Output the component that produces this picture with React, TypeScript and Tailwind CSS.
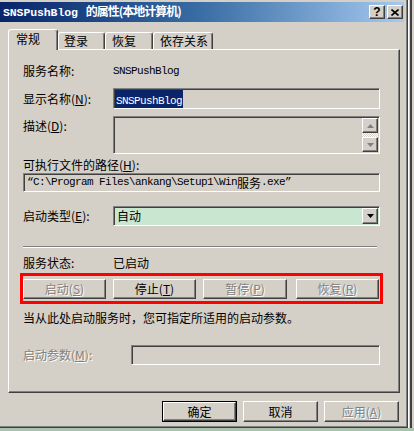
import React from 'react';

const cjk = "font-['Noto_Sans_CJK_SC',sans-serif]";
const mono = "font-['Liberation_Mono','Noto_Sans_CJK_SC',monospace]";

const raised =
  'border border-t-white border-l-white border-r-[#404040] border-b-[#404040] shadow-[inset_-1px_-1px_0_#808080]';
const sunken =
  'border border-t-[#808080] border-l-[#808080] border-r-white border-b-white shadow-[inset_1px_1px_0_#404040]';
const etched = 'text-[#808080] [text-shadow:1px_1px_0_#ffffff]';

const Key = ({ k }: { k: string }) => (
  <>
    (<span className="underline underline-offset-1">{k}</span>)
  </>
);

const Label: React.FC<{ text: string; k?: string; disabled?: boolean; className?: string }> = ({
  text,
  k,
  disabled,
  className = '',
}) => (
  <div className={`w-[90px] shrink-0 text-[12px] leading-[14px] ${disabled ? etched : 'text-black'} ${className}`}>
    {text}
    {k && <Key k={k} />}:
  </div>
);

const Latin: React.FC<{ children: React.ReactNode; className?: string }> = ({ children, className = '' }) => (
  <span className={`${mono} text-[11px] tracking-[-0.6px] ${className}`}>{children}</span>
);

const Arrow = ({ dir, color = '#000' }: { dir: 'up' | 'down'; color?: string }) => (
  <svg width="7" height="4" viewBox="0 0 7 4">
    {dir === 'up' ? <path d="M3.5 0 L7 4 L0 4 Z" fill={color} /> : <path d="M0 0 L7 0 L3.5 4 Z" fill={color} />}
  </svg>
);

const ServiceButton: React.FC<{ label: string; k: string; disabled?: boolean; className?: string }> = ({
  label,
  k,
  disabled,
  className = '',
}) => (
  <div
    className={`h-[20px] flex items-center justify-center text-[12px] ${raised} ${disabled ? etched : 'text-black'} ${className}`}
  >
    {label}
    <Key k={k} />
  </div>
);

export default function App() {
  return (
    <div className={`w-[414px] h-[431px] bg-[#a9c3ae] flex overflow-hidden ${cjk}`}>
      <div className="w-[408px] h-[428px] shrink-0 bg-[#d4d0c8] border-r border-b border-[#404040] shadow-[inset_-1px_-1px_0_#808080] flex flex-col">
        {/* title bar */}
        <div className="mt-[2px] mr-[3px] h-[20px] flex items-center bg-gradient-to-r from-[#0a246a] via-[#3a6ea5] to-[#a6caf0]">
          <div className="pl-[3px] text-white font-bold text-[12px] leading-[14px] whitespace-nowrap flex items-baseline">
            <span className="font-['Liberation_Mono','DejaVu_Sans_Mono',monospace] text-[11.5px] tracking-[-0.1px]">
              SNSPushBlog
            </span>
            <span className="ml-[8px] tracking-[-1px]">的属性(本地计算机)</span>
          </div>
          <div className="ml-auto flex items-center gap-[2px] pr-[1px]">
            <div className={`w-[16px] h-[14px] bg-[#d4d0c8] ${raised} flex items-center justify-center text-[12px] font-bold leading-none text-black font-['Liberation_Sans',sans-serif]`}>
              ?
            </div>
            <div className={`w-[16px] h-[14px] bg-[#d4d0c8] ${raised} flex items-center justify-center`}>
              <svg width="8" height="7" viewBox="0 0 8 7">
                <path d="M0.5 0.5 L7.5 6.5 M7.5 0.5 L0.5 6.5" stroke="#000" strokeWidth="1.6" />
              </svg>
            </div>
          </div>
        </div>

        {/* tabs */}
        <div className="mt-[7px] h-[20px] pl-[8px] flex items-end relative z-10">
          <div className="w-[50px] h-[21px] -mb-[1px] bg-[#d4d0c8] border-t border-l border-white border-r border-r-[#404040] rounded-t-[3px] shadow-[inset_-1px_0_0_#808080] pl-[7px] pt-[2px] text-[12px] leading-[14px]">
            常规
          </div>
          <div className="w-[47px] h-[17px] border-t border-l border-white border-r border-r-[#404040] rounded-t-[3px] shadow-[inset_-1px_0_0_#808080] pl-[5px] pt-[1px] text-[12px] leading-[14px]">
            登录
          </div>
          <div className="w-[48px] h-[17px] border-t border-l border-white border-r border-r-[#404040] rounded-t-[3px] shadow-[inset_-1px_0_0_#808080] pl-[6px] pt-[1px] text-[12px] leading-[14px]">
            恢复
          </div>
          <div className="w-[60px] h-[17px] border-t border-l border-white border-r border-r-[#404040] rounded-t-[3px] shadow-[inset_-1px_0_0_#808080] pl-[6px] pt-[1px] text-[12px] leading-[14px]">
            依存关系
          </div>
        </div>

        {/* panel */}
        <div className="ml-[8px] w-[392px] h-[344px] border-t border-l border-white border-r border-b border-r-[#404040] border-b-[#404040] shadow-[inset_-1px_-1px_0_#808080] pl-[14px] pr-[19px] flex flex-col">
          <div className="mt-[14px] flex items-center h-[14px]">
            <Label text="服务名称" />
            <Latin>SNSPushBlog</Latin>
          </div>

          <div className="mt-[10px] flex items-center">
            <Label text="显示名称" k="N" />
            <div className={`flex-1 h-[21px] ${sunken} flex items-center pl-[1px]`}>
              <span className="bg-[#0a246a] text-white leading-[14px] px-[1px]">
                <Latin>SNSPushBlog</Latin>
              </span>
            </div>
          </div>

          <div className="mt-[7px] flex items-start">
            <Label text="描述" k="D" className="mt-[3px]" />
            <div className={`flex-1 h-[38px] ${sunken} flex justify-end p-[1px]`}>
              <div className="w-[16px] flex flex-col">
                <div className={`h-[15px] bg-[#d4d0c8] ${raised} flex items-center justify-center`}>
                  <Arrow dir="up" color="#808080" />
                </div>
                <div className="flex-1 bg-[repeating-conic-gradient(#d4d0c8_0_25%,#ffffff_0_50%)] bg-[length:2px_2px]" />
                <div className={`h-[15px] bg-[#d4d0c8] ${raised} flex items-center justify-center`}>
                  <Arrow dir="down" color="#808080" />
                </div>
              </div>
            </div>
          </div>

          <div className="mt-[4px] h-[14px] text-[12px] leading-[14px]">
            可执行文件的路径<Key k="H" />:
          </div>
          <div className={`mt-[1px] h-[19px] ${sunken} flex items-center pl-[3px] text-[12px]`}>
            <Latin>“C:\Program Files\ankang\Setup1\Win</Latin>
            <span>服务</span>
            <Latin>.exe”</Latin>
          </div>

          <div className="mt-[14px] flex items-center">
            <Label text="启动类型" k="E" />
            <div className={`flex-1 h-[20px] ${sunken} bg-[#c8e6d0] flex items-center p-[1px]`}>
              <span className="pl-[2px] text-[12px] leading-[14px]">自动</span>
              <div className={`ml-auto w-[16px] h-[16px] bg-[#d4d0c8] ${raised} flex items-center justify-center`}>
                <Arrow dir="down" />
              </div>
            </div>
          </div>

          <div className="mt-[20px] h-[2px] border-t border-[#808080] border-b border-b-white mr-[3px]" />

          <div className="mt-[8px] flex items-center h-[14px]">
            <Label text="服务状态" />
            <span className="text-[12px] leading-[14px]">已启动</span>
          </div>

          <div className="mt-[3px] -ml-[3px] -mr-[3px] h-[31px] border-[3px] border-[#ff0000] pt-[3px] flex">
            <ServiceButton label="启动" k="S" disabled className="w-[83px]" />
            <ServiceButton label="停止" k="T" className="w-[83px] ml-[7px]" />
            <ServiceButton label="暂停" k="P" disabled className="w-[84px] ml-[7px]" />
            <ServiceButton label="恢复" k="R" disabled className="w-[83px] ml-[9px]" />
          </div>

          <div className="mt-[7px] h-[14px] text-[12px] leading-[14px]">
            当从此处启动服务时，您可指定所适用的启动参数。
          </div>

          <div className="mt-[20px] flex items-center">
            <Label text="启动参数" k="M" disabled className="w-[108px]" />
            <div className={`flex-1 h-[20px] ${sunken}`} />
          </div>
        </div>

        {/* dialog buttons */}
        <div className="mt-[8px] flex justify-end pr-[8px] gap-[6px] text-[12px]">
          <div className="w-[75px] h-[21px] border border-black flex">
            <div className={`flex-1 ${raised} flex items-center justify-center`}>确定</div>
          </div>
          <div className={`w-[75px] h-[21px] ${raised} flex items-center justify-center`}>取消</div>
          <div className={`w-[75px] h-[21px] ${raised} ${etched} flex items-center justify-center`}>
            应用<Key k="A" />
          </div>
        </div>
      </div>
      <div className="flex-1 h-[428px] bg-[#d4d0c8] border-l border-[#ffffff] flex">
        <div className="w-[2px] ml-[1px] bg-[#404040]" />
      </div>
    </div>
  );
}
